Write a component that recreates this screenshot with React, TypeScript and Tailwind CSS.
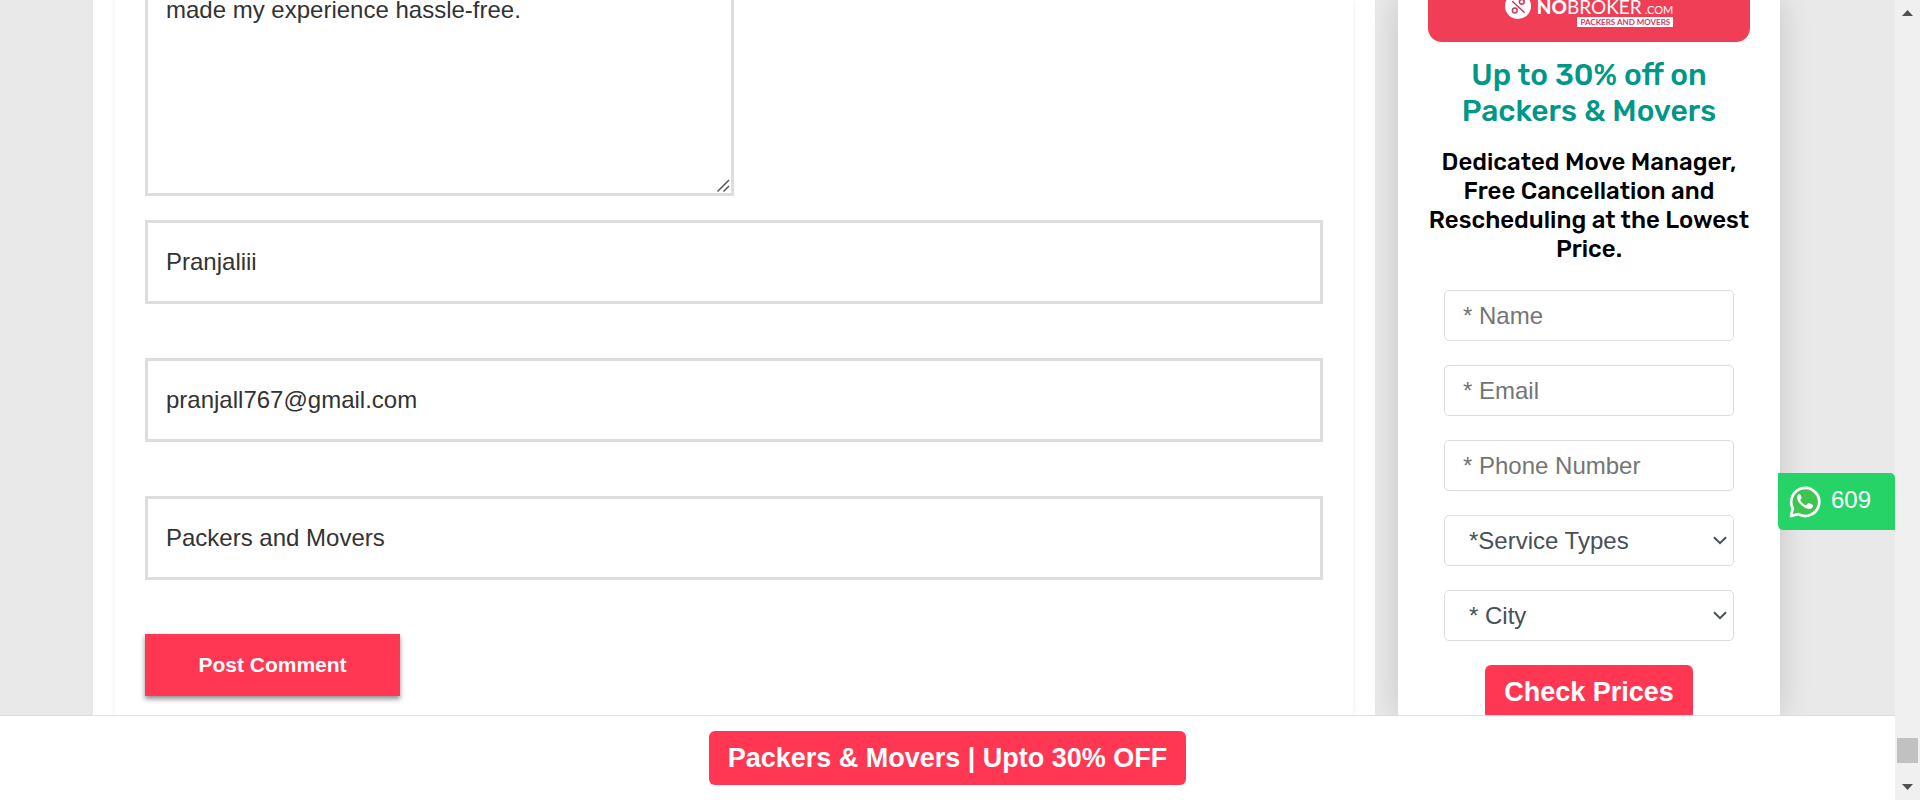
import React from "react";

const sans = "font-['Liberation_Sans',Arial,sans-serif]";

function CommentField({ id, label, value, type = "text" }: { id: string; label: string; value: string; type?: string }) {
  return (
    <input
      id={id}
      type={type}
      aria-label={label}
      defaultValue={value}
      className="block h-[84px] w-full border-[3px] border-[#ddd] bg-white px-[18px] text-2xl text-[#333] outline-none"
    />
  );
}

function CommentForm() {
  return (
    <form className="flex flex-col px-[30px]" onSubmit={(e) => e.preventDefault()}>
      <div className="relative mb-6 w-1/2">
        <textarea
          aria-label="Comment"
          defaultValue="made my experience hassle-free."
          className="block h-[196px] w-full resize-none border-[3px] border-t-0 border-[#ddd] bg-white px-[18px] text-2xl leading-5 text-[#333] outline-none"
        />
        <svg className="absolute right-1 bottom-1 size-[13px]" viewBox="0 0 13 13" stroke="#555" strokeWidth="1.5" fill="none">
          <path d="M0.5 12.5L12 1M6.5 12.5L12 7" />
        </svg>
      </div>
      <div className="flex flex-col items-start gap-[54px]">
        <CommentField id="author" label="Name" value="Pranjaliii" />
        <CommentField id="email" label="Email" type="email" value="pranjall767@gmail.com" />
        <CommentField id="url" label="Website" value="Packers and Movers" />
        <button
          type="submit"
          className="h-[62px] w-[255px] bg-[#ff3753] text-[21px] font-bold whitespace-nowrap text-white shadow-[0_3px_5px_rgba(0,0,0,0.45)]"
        >
          Post Comment
        </button>
      </div>
    </form>
  );
}

function Banner() {
  return (
    <div className="flex h-[42px] justify-center overflow-hidden rounded-b-[14px] bg-[#ef3e56] font-[Lato,sans-serif] text-white">
      <svg className="-mt-[7px] mr-[6px] size-[26px] shrink-0" viewBox="0 0 26 26">
        <circle cx="13" cy="13" r="13" fill="#fff" />
        <g fill="none" stroke="#c93a62" strokeWidth="1.5" strokeLinecap="round">
          <circle cx="9.8" cy="17.5" r="2.4" />
          <circle cx="16.8" cy="8.8" r="2.4" />
          <path d="M7.500 8.500L19.200 19.200" />
        </g>
      </svg>
      <div className="flex flex-col items-end">
        <div className="flex h-[17px] items-baseline gap-[3px] text-[19px] leading-[14px] whitespace-nowrap">
          <span>
            <span className="font-black">NO</span>BROKER
          </span>
          <span className="text-[11px]">.COM</span>
        </div>
        <div className="bg-white px-[3px] text-[8px] leading-[10px] font-bold whitespace-nowrap text-[#d03a62]">
          PACKERS AND MOVERS
        </div>
      </div>
    </div>
  );
}

const fieldBox = "block h-[51px] w-full rounded-[5px] border border-[#ddd] bg-white text-2xl outline-none";

function QuoteSelect({ label, text }: { label: string; text: string }) {
  return (
    <div className="relative">
      <select aria-label={label} className={`${fieldBox} appearance-none pr-8 pl-6 text-[#495057]`}>
        <option>{text}</option>
      </select>
      <svg
        className="pointer-events-none absolute top-[21px] right-[7px] h-[9px] w-[14px]"
        viewBox="0 0 14 9"
        fill="none"
        stroke="#495057"
        strokeWidth="2"
      >
        <path d="M1 1.2L7 7.2L13 1.2" />
      </svg>
    </div>
  );
}

function QuoteCard() {
  return (
    <aside className="w-[382px] shrink-0 bg-white px-[30px] shadow-[0_0_30px_rgba(0,0,0,0.16)]">
      <Banner />
      <h2 className="mt-[15px] text-center font-[Rubik,Roboto,sans-serif] text-[30px] leading-9 font-medium text-[#009688]">
        Up to 30% off on
        <br />
        Packers &amp; Movers
      </h2>
      <p className="-mx-4 mt-[19px] text-center font-[Rubik,Roboto,sans-serif] text-[24px] leading-[29px] font-medium text-black">
        Dedicated Move Manager,
        <br />
        Free Cancellation and
        <br />
        Rescheduling at the Lowest
        <br />
        Price.
      </p>
      <form className="mt-[26px] flex flex-col gap-6 px-4" onSubmit={(e) => e.preventDefault()}>
        <input aria-label="Name" placeholder="* Name" className={`${fieldBox} px-[18px] placeholder:text-[#757575]`} />
        <input aria-label="Email" type="email" placeholder="* Email" className={`${fieldBox} px-[18px] placeholder:text-[#757575]`} />
        <input aria-label="Phone Number" type="tel" placeholder="* Phone Number" className={`${fieldBox} px-[18px] placeholder:text-[#757575]`} />
        <QuoteSelect label="Service Types" text="*Service Types" />
        <QuoteSelect label="City" text="* City" />
        <button type="submit" className="h-[54px] self-center rounded-md bg-[#ff3753] px-[19px] text-[27px] font-bold whitespace-nowrap text-white">
          Check Prices
        </button>
      </form>
    </aside>
  );
}

function WhatsAppIcon() {
  return (
    <svg className="size-8 shrink-0" viewBox="0 0 32 32">
      <path
        d="M3.8 22.4A14 14 0 1 1 9.3 28.1L2 30Z"
        fill="#3fc351"
        stroke="#fff"
        strokeWidth="2.7"
        strokeLinejoin="round"
      />
      <path
        d="M11.7 9.1c-.4-.8-.7-.9-1.3-.9-1.4 0-2.7 1.7-2.4 3.8.4 3 3.2 6.5 6.2 8.6 2.7 1.9 5.5 2.8 7.4 2.1 1.6-.6 2.5-1.7 2.4-3.2 0-.4-.2-.6-.6-.8l-3.4-1.6c-.5-.2-.8-.1-1.1.3l-1.3 1.6c-.3.3-.6.4-1 .2-2.5-1.1-4.1-2.7-5.2-4.7-.2-.4-.1-.7.1-1l1-1.2c.2-.3.2-.6.1-.9Z"
        fill="#fff"
      />
    </svg>
  );
}

function Scrollbar() {
  return (
    <div aria-hidden="true" className="flex w-[25px] shrink-0 flex-col items-center justify-between bg-[#f0f0f0] py-[10px]">
      <svg className="h-[6px] w-[11px]" viewBox="0 0 11 6" fill="#505050">
        <path d="M5.5 0L11 6H0Z" />
      </svg>
      <div className="flex flex-col items-center gap-[21px]">
        <div className="h-[25px] w-[21px] bg-[#c1c1c1]" />
        <svg className="h-[6px] w-[11px]" viewBox="0 0 11 6" fill="#505050">
          <path d="M0 0H11L5.5 6Z" />
        </svg>
      </div>
    </div>
  );
}

export default function App() {
  return (
    <div className={`flex h-screen overflow-hidden ${sans}`}>
      <div className="relative flex min-w-0 flex-1 flex-col">
        <main className="flex min-h-0 flex-1 gap-[23px] overflow-hidden bg-[#e9e9e9] pr-[115px] pl-[93px]">
          <section className="min-w-0 flex-1 bg-white px-[22px]">
            <div className="h-full bg-white shadow-[0_0_6px_rgba(0,0,0,0.08)]">
              <CommentForm />
            </div>
          </section>
          <QuoteCard />
        </main>
        <footer className="flex h-[85px] shrink-0 items-start justify-center border-t border-[#ddd] bg-white pt-[15px]">
          <a href="#packers" className="flex h-[54px] items-center rounded-md bg-[#ff3753] px-[19px] text-[27px] font-bold whitespace-nowrap text-white">
            Packers &amp; Movers | Upto 30% OFF
          </a>
        </footer>
        <a
          href="#whatsapp"
          className="absolute right-0 bottom-[270px] flex h-[57px] w-[117px] items-center gap-[10px] rounded-tr-[5px] rounded-bl-[5px] bg-[#25d366] pl-[11px] text-2xl text-white"
        >
          <WhatsAppIcon />
          <span className="pb-1">609</span>
        </a>
      </div>
      <Scrollbar />
    </div>
  );
}
